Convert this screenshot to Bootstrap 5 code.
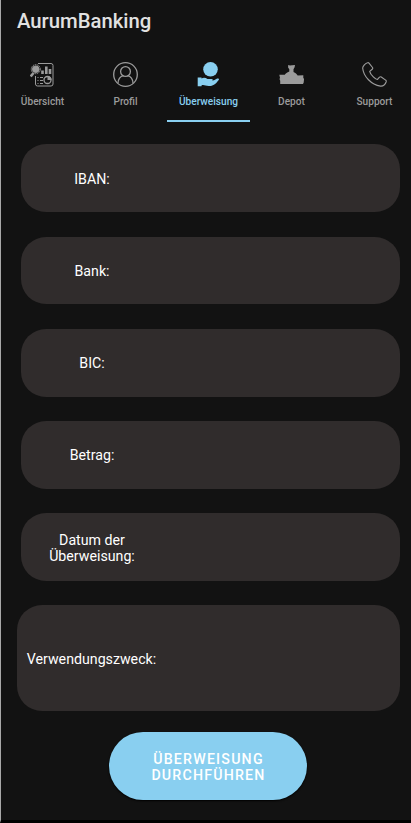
<!DOCTYPE html>
<html lang="de">
<head>
<meta charset="utf-8">
<meta name="viewport" content="width=device-width, initial-scale=1">
<title>AurumBanking</title>
<link href="https://cdn.jsdelivr.net/npm/bootstrap@5.3.0/dist/css/bootstrap.min.css" rel="stylesheet">
<style>
body{background:#121212;color:#fff;font-family:Roboto,sans-serif;font-size:14.2px;line-height:16px}
.screen{height:823px;border-left:1px solid #a8a8a8;border-bottom:3px solid #000;background:#121212}
.app-title{font-size:20.3px;line-height:24px;font-weight:500;color:#e1e1e1;padding:9px 0 0 16px;height:47px}
.tabs{height:75px}
.tabs .nav-link{width:83px;flex:none;padding:15px 0 0;color:#9b9b9b;font-size:10.1px;line-height:14px;font-weight:500;height:75px;border-bottom:2px solid transparent;border-radius:0}
.tabs .nav-link.active{color:#89cff0;border-color:#89cff0}
.tabs svg{display:block;width:25px;height:25px;margin-bottom:8px}
.fields{padding:22.4px 11px 0 20px;gap:24.3px}
.field-box{height:67.9px;border-radius:25px;background:#302c2c}
.field-box label{width:142px;padding-top:1px}
.field-tall{height:106px;margin-left:-4px}
.field-tall label{width:149px}
.field-box input{background:none;border:0;color:#fff;min-width:0}
.send{width:198px;height:68px;margin:20.700px 0 0 108px;border-radius:34px;background:#89cff0;color:#fff;font-size:14.2px;line-height:16px;font-weight:500;letter-spacing:1.200px;box-shadow:0 1px 2px #000}
.send.btn{padding:1px 0 0 1px}
</style>
<script src="https://cdn.jsdelivr.net/npm/bootstrap@5.3.0/dist/js/bootstrap.bundle.min.js"></script>
</head>
<body>
<main class="screen overflow-hidden">
<header class="app-title">AurumBanking</header>
<nav class="nav flex-nowrap tabs">
<a class="nav-link d-flex flex-column align-items-center" href="#"><svg viewBox="0 0 25 25" fill="none" stroke="currentColor"><path d="M8 1.500h13q2 0 2 2v18.500q0 2-2 2H7.500q-2 0-2-2V14"/><circle cx="5.800" cy="7.200" r="3.300" fill="currentColor"/><circle cx="5.800" cy="7.200" r="4.500" stroke-dasharray="1.500 .7"/><path d="M3.500 11 .7 14.500" stroke-width="2.600"/><path d="M12.500 12V8.500M16.300 12V4.500M20 12V7" stroke-width="2.600"/><path d="M7.500 15.500h1M10 15.500h3M7.500 18.500h1M10 18.500h3M7.500 21.500h1M10 21.500h3" stroke-width="1.200"/><circle cx="17.500" cy="18" r="3.500" stroke-width="1.300"/><path d="M17.500 18v-4a4 4 0 0 1 4 4z" fill="currentColor" stroke="none"/></svg>Übersicht</a>
<a class="nav-link d-flex flex-column align-items-center" href="#"><svg viewBox="0 0 25 25" fill="none" stroke="currentColor" stroke-width="1.300"><circle cx="12.500" cy="12.500" r="11.800"/><circle cx="12.500" cy="9.500" r="4.900"/><path d="M5 21.300c.2-4.200 2.500-6.900 5.500-7.600M20 21.300c-.2-4.200-2.500-6.900-5.500-7.600"/></svg>Profil</a>
<a class="nav-link active d-flex flex-column align-items-center" aria-current="page" href="#"><svg viewBox="0 0 25 25" fill="currentColor"><circle cx="14.500" cy="7.300" r="7.300"/><path d="M1.700 15.500h3.800v.9c2.200-1 4.200-.6 6 .5h4c1.500 0 1.900 1.400.3 1.800 3.300-.1 4-2.200 6.400-2.200.9 0 1 .8.500 1.600-3.700 5-6.500 6.200-10 6-3.200-.2-5-1.600-7.200-.7v.9H1.700z"/></svg>Überweisung</a>
<a class="nav-link d-flex flex-column align-items-center" href="#"><svg viewBox="0 0 25 25" fill="currentColor"><path d="M9.200 2.900 11 3.400l2-.2 3-.3-.4 2.400-1.100 2v2.600c2.100.8 3.200 1.900 4.200 3.500l5.600-.2v3l.8.200-.4 4.200-.7 1.300H1.200v-3.200l-.8-2 .7-.4-.8-3.500h5.500c1-1.600 2.200-2.500 4.500-3.400V7.200L9.100 5.500z"/></svg>Depot</a>
<a class="nav-link d-flex flex-column align-items-center" href="#"><svg viewBox="0 0 25 25" fill="none" stroke="currentColor" stroke-width="1.150" stroke-linejoin="round"><path d="M5.500.8C3 1.500.6 4.300.7 6.200 1.500 14.500 9.300 22.700 18.500 24.100c2.400.2 4.800-1.800 5.700-4.400.2-.7 0-1.200-.6-1.600L19.300 15c-.7-.4-1.300-.4-1.800.2l-2 2.200c-1.300.5-7.300-4.700-7.800-8l2.500-2.200c.6-.5.7-1 .3-1.700L7 1.200c-.4-.5-.9-.6-1.500-.4z"/></svg>Support</a>
</nav>
<form class="fields d-flex flex-column">
<div class="field-box d-flex align-items-center"><label class="text-center" for="iban">IBAN:</label><input class="flex-fill" id="iban"></div>
<div class="field-box d-flex align-items-center"><label class="text-center" for="bank">Bank:</label><input class="flex-fill" id="bank"></div>
<div class="field-box d-flex align-items-center"><label class="text-center" for="bic">BIC:</label><input class="flex-fill" id="bic"></div>
<div class="field-box d-flex align-items-center"><label class="text-center" for="amount">Betrag:</label><input class="flex-fill" id="amount"></div>
<div class="field-box d-flex align-items-center"><label class="text-center" for="date">Datum der<br>Überweisung:</label><input class="flex-fill" id="date"></div>
<div class="field-box field-tall d-flex align-items-center"><label class="text-center" for="purpose">Verwendungszweck:</label><input class="flex-fill" id="purpose"></div>
</form>
<button class="btn send border-0" type="button">ÜBERWEISUNG<br>DURCHFÜHREN</button>
</main>
</body>
</html>
